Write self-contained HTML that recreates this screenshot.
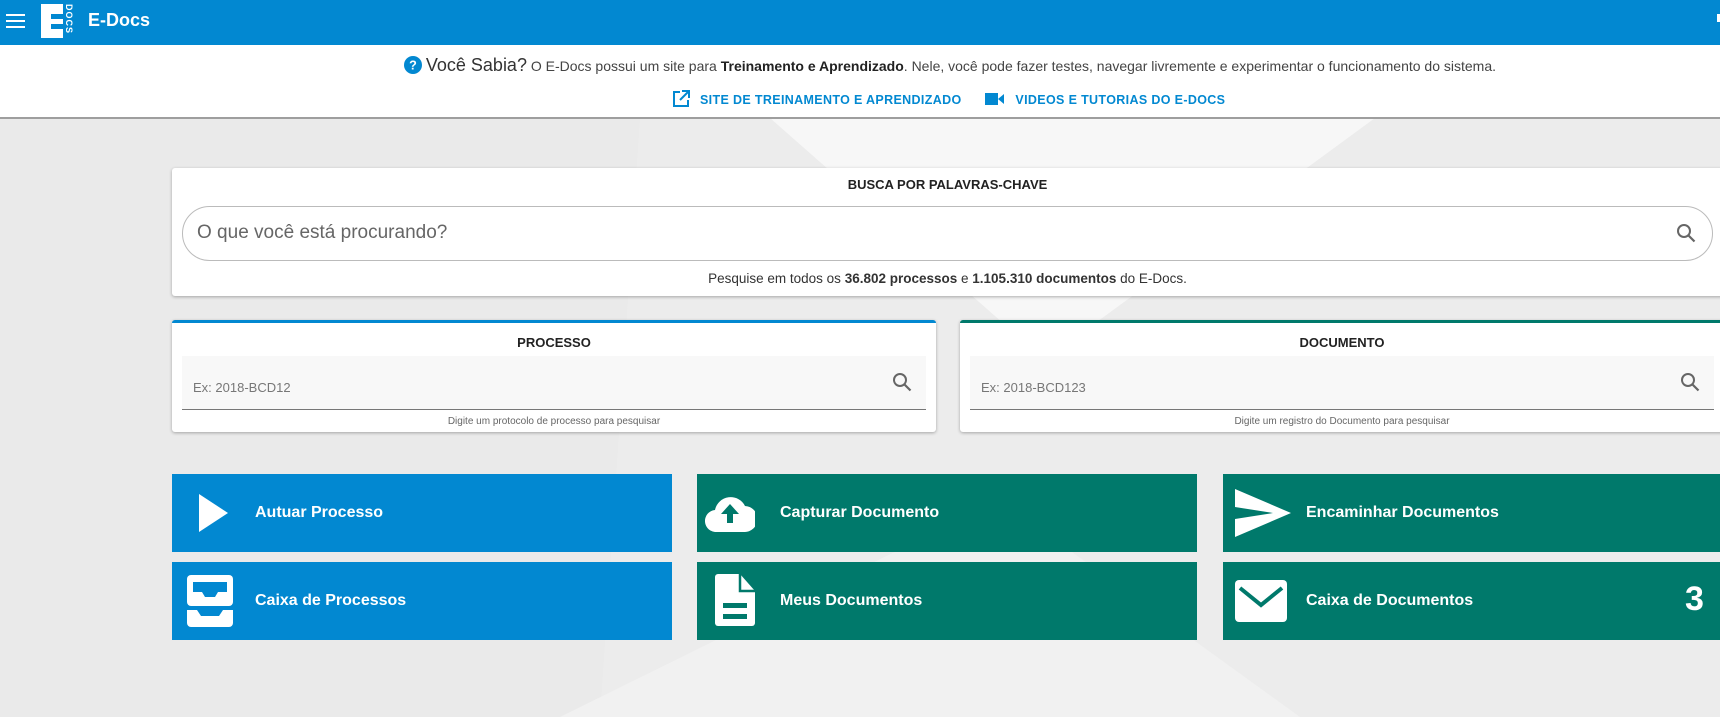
<!DOCTYPE html>
<html><head><meta charset="utf-8">
<style>
*{box-sizing:border-box;margin:0;padding:0}
body{width:1720px;height:717px;overflow:hidden;font-family:"Liberation Sans",Arial,sans-serif;background:#ececec;position:relative}
.bg{position:absolute;left:0;top:0}
.hdr{position:absolute;left:0;top:0;width:1720px;height:45px;background:#0288d1;color:#fff}
.info{position:absolute;left:0;top:45px;width:1720px;height:74px;background:#fff;border-bottom:2px solid #9e9e9e}
.q{position:absolute;top:10px;left:0;width:1720px;text-align:center;font-size:14px;color:#444;padding-left:180px}
.links{position:absolute;top:45px;left:672px;font-size:12.5px;color:#0288d1;letter-spacing:0.35px;font-weight:bold}
.card{position:absolute;background:#fff;border-radius:3px;box-shadow:0 1px 3px rgba(0,0,0,.3)}
.t{font-size:13px;font-weight:bold;color:#222;text-align:center}
.btn{position:absolute;height:78px;width:500px;color:#fff;font-weight:bold;font-size:16px}
.btn span{position:absolute;left:83px;top:30px}
.btn svg{position:absolute}
.b{background:#0288d1}.g{background:#00796b}
</style></head><body>
<svg class="bg" width="1720" height="717">
<polygon points="770,118 1375,118 1045,360" fill="#f7f7f7"/>
<polygon points="0,118 640,118 600,717 0,717" fill="#eaeaea"/>
<polygon points="560,717 1000,500 1300,717" fill="#f1f1f1"/>
</svg>
<div class="hdr">
<svg style="position:absolute;left:6px;top:14px" width="20" height="16"><rect y="0" width="19" height="2" fill="#fff"/><rect y="6" width="19" height="2" fill="#fff"/><rect y="12" width="19" height="2" fill="#fff"/></svg>
<div style="position:absolute;left:41px;top:4px;width:22px;height:34px;background:#fff"></div>
<div style="position:absolute;left:51px;top:14px;width:12px;height:5px;background:#0288d1"></div>
<div style="position:absolute;left:51px;top:24px;width:12px;height:5px;background:#0288d1"></div>
<div style="position:absolute;left:62px;top:4px;width:14px;height:34px;color:#fff;font-size:9px;font-weight:bold;writing-mode:vertical-rl;line-height:14px;letter-spacing:1px">DOCS</div>
<div style="position:absolute;left:88px;top:10px;font-size:18px;font-weight:bold">E-Docs</div>
<div style="position:absolute;left:1717px;top:14px;width:3px;height:8px;background:#fff"></div>
</div>
<div class="info">
<div class="q"><svg width="18" height="18" style="vertical-align:-3px" viewBox="0 0 20 20"><circle cx="10" cy="10" r="10" fill="#0288d1"/><text x="10" y="15" text-anchor="middle" font-size="14" font-weight="bold" fill="#fff" font-family="Liberation Sans">?</text></svg> <span style="font-size:18px;color:#333">Você Sabia?</span> O E-Docs possui um site para <b style="color:#222">Treinamento e Aprendizado</b>. Nele, você pode fazer testes, navegar livremente e experimentar o funcionamento do sistema.</div>
<div class="links">
<svg width="18" height="18" viewBox="0 0 18 18" style="vertical-align:-4px;margin-right:10px"><path d="M8 2H2v14h14v-6" fill="none" stroke="#0288d1" stroke-width="2"/><path d="M10 1h7v7M17 1L8 10" fill="none" stroke="#0288d1" stroke-width="2"/></svg>SITE DE TREINAMENTO E APRENDIZADO
<svg width="20" height="14" viewBox="0 0 20 14" style="vertical-align:-2px;margin:0 10px 0 20px"><rect x="0" y="1" width="13" height="12" fill="#0288d1"/><path d="M13 7l6-5v10z" fill="#0288d1"/></svg>VIDEOS E TUTORIAS DO E-DOCS</div>
</div>

<div class="card" style="left:172px;top:168px;width:1560px;height:128px">
<div class="t" style="position:absolute;top:9px;left:0;width:1551px">BUSCA POR PALAVRAS-CHAVE</div>
<div style="position:absolute;left:10px;top:38px;width:1531px;height:55px;border:1px solid #bbb;border-radius:28px">
<div style="position:absolute;left:14px;top:15px;font-size:19px;color:#666">O que você está procurando?</div>
<svg style="position:absolute;right:16px;top:16px" width="20" height="20" viewBox="0 0 20 20"><circle cx="8" cy="8" r="6" fill="none" stroke="#666" stroke-width="2"/><path d="M12.5 12.5l6 6" stroke="#666" stroke-width="2.2"/></svg>
</div>
<div style="position:absolute;top:103px;left:0;width:1551px;text-align:center;font-size:13.5px;color:#333">Pesquise em todos os <b>36.802 processos</b> e <b>1.105.310 documentos</b> do E-Docs.</div>
</div>

<div class="card" style="left:172px;top:320px;width:764px;height:112px;border-top:3px solid #0288d1">
<div class="t" style="position:absolute;top:12px;width:100%">PROCESSO</div>
<div style="position:absolute;left:10px;top:33px;width:744px;height:54px;background:#f8f8f8;border-bottom:1px solid #777">
<div style="position:absolute;left:11px;top:24px;font-size:13px;color:#777">Ex: 2018-BCD12</div>
<svg style="position:absolute;right:14px;top:16px" width="20" height="20" viewBox="0 0 20 20"><circle cx="8" cy="8" r="6" fill="none" stroke="#666" stroke-width="2"/><path d="M12.5 12.5l6 6" stroke="#666" stroke-width="2.2"/></svg></div>
<div style="position:absolute;top:93px;width:100%;text-align:center;font-size:10px;color:#666">Digite um protocolo de processo para pesquisar</div>
</div>
<div class="card" style="left:960px;top:320px;width:772px;height:112px;border-top:3px solid #00796b">
<div class="t" style="position:absolute;top:12px;width:764px">DOCUMENTO</div>
<div style="position:absolute;left:10px;top:33px;width:744px;height:54px;background:#f8f8f8;border-bottom:1px solid #777">
<div style="position:absolute;left:11px;top:24px;font-size:13px;color:#777">Ex: 2018-BCD123</div>
<svg style="position:absolute;right:14px;top:16px" width="20" height="20" viewBox="0 0 20 20"><circle cx="8" cy="8" r="6" fill="none" stroke="#666" stroke-width="2"/><path d="M12.5 12.5l6 6" stroke="#666" stroke-width="2.2"/></svg></div>
<div style="position:absolute;top:93px;width:764px;text-align:center;font-size:10px;color:#666">Digite um registro do Documento para pesquisar</div>
</div>

<div class="btn b" style="left:172px;top:474px"><svg style="left:27px;top:20px" width="30" height="38"><path d="M0 0L29 19L0 38z" fill="#fff"/></svg><span>Autuar Processo</span></div>
<div class="btn g" style="left:697px;top:474px"><svg style="left:8px;top:18px" width="50" height="40" viewBox="0 0 50 40"><path d="M12 40a11 11 0 0 1-2-22A16 16 0 0 1 40 14a13 13 0 0 1-1 26z" fill="#fff"/><path d="M25 12l-9 10h6v9h6v-9h6z" fill="#00796b"/></svg><span>Capturar Documento</span></div>
<div class="btn g" style="left:1223px;top:474px"><svg style="left:12px;top:15px" width="56" height="48" viewBox="0 0 56 48"><path d="M0 0L56 24L0 48L0 30L38 24L0 18z" fill="#fff"/></svg><span>Encaminhar Documentos</span></div>
<div class="btn b" style="left:172px;top:562px"><svg style="left:15px;top:13px" width="46" height="52" viewBox="0 0 46 52"><rect x="0" y="0" width="46" height="31" rx="4" fill="#fff"/><path d="M6 7h34v10h-9l-3 5h-10l-3-5h-9z" fill="#0288d1"/><path d="M0 35h10l4 6h18l4-6h10v13a4 4 0 0 1-4 4H4a4 4 0 0 1-4-4z" fill="#fff"/></svg><span>Caixa de Processos</span></div>
<div class="btn g" style="left:697px;top:562px"><svg style="left:18px;top:12px" width="40" height="52" viewBox="0 0 40 52"><path d="M3 0h22l15 17v32a3 3 0 0 1-3 3H3a3 3 0 0 1-3-3V3a3 3 0 0 1 3-3z" fill="#fff"/><rect x="8" y="29" width="24" height="5" fill="#00796b"/><rect x="8" y="40" width="24" height="5" fill="#00796b"/><path d="M25 0v17h15" fill="none" stroke="#00796b" stroke-width="2.5"/></svg><span>Meus Documentos</span></div>
<div class="btn g" style="left:1223px;top:562px"><svg style="left:12px;top:18px" width="52" height="42" viewBox="0 0 52 42"><rect width="52" height="42" rx="4" fill="#fff"/><path d="M5 8l21 17l21-17" fill="none" stroke="#00796b" stroke-width="4"/></svg><span>Caixa de Documentos</span><div style="position:absolute;left:462px;top:18px;font-size:34px">3</div></div>
</body></html>
